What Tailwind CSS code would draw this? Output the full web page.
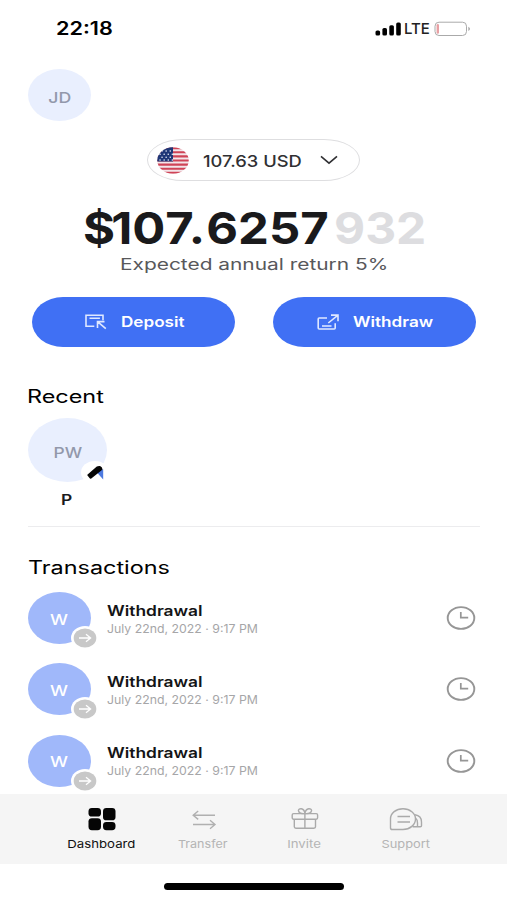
<!DOCTYPE html>
<html lang="en">
<head>
<meta charset="utf-8">
<title>Dashboard</title>
<script src="https://cdn.jsdelivr.net/npm/@tailwindcss/browser@4"></script>
</head>
<body class="bg-white">
<svg class="hidden">
  <symbol id="clock" viewBox="0 0 30 26"><ellipse cx="15" cy="13" rx="13.3" ry="10.9" fill="none" stroke="#969696" stroke-width="1.9"/><path d="M14.8 7v5.6h7.4" fill="none" stroke="#969696" stroke-width="1.7"/></symbol>
  <symbol id="arrow" viewBox="0 0 28 24"><ellipse cx="14" cy="12" rx="14" ry="12" fill="#fff"/><ellipse cx="14" cy="12" rx="11.3" ry="9.5" fill="#c8c8c8"/><path d="M8 12h11.5M15 8.2l4.6 3.8-4.6 3.8" fill="none" stroke="#fff" stroke-width="1.3"/></symbol>
</svg>
<div class="w-[507px] h-[900px] overflow-hidden flex flex-col font-['Inter',sans-serif] whitespace-nowrap text-[#1a1a1c]">
  <header class="h-[57px] shrink-0 flex items-center justify-between pl-14 pr-[35px]">
    <span class="text-[18px] leading-6 font-semibold text-black origin-left scale-x-[1.2]">22:18</span>
    <div class="flex items-center">
      <svg class="w-[27px] h-[14px]" viewBox="0 0 27 14"><g fill="#000"><rect x=".5" y="8.5" width="4.6" height="5" rx="1.6"/><rect x="7.4" y="6" width="4.6" height="7.5" rx="1.6"/><rect x="14.3" y="3.2" width="4.6" height="10.3" rx="1.6"/><rect x="21.2" y=".5" width="4.6" height="13" rx="1.6"/></g></svg>
      <span class="text-[15px] leading-6 font-medium w-[27px] ml-0.5 text-[#222]">LTE</span>
      <svg class="w-[38px] h-4 ml-[3px]" viewBox="0 0 38 16"><rect x="1" y="1.2" width="31.5" height="13.3" rx="4" fill="#fff" stroke="#aaa"/><rect x="2.6" y="3" width="2.4" height="9.7" rx="1.2" fill="#e8a0a4"/><path d="M34.3 5.8c2.2.8 2.2 3.4 0 4.2z" fill="#aaa"/></svg>
    </div>
  </header>

  <main class="h-[737px] shrink-0 flex flex-col pl-7 pr-[27px] overflow-hidden">
    <div class="mt-3 w-[63px] h-[52px] shrink-0 rounded-[50%] bg-[#e9effe] flex items-center justify-center pt-1.5">
      <span class="text-[15px] leading-5 font-medium text-[#9298ab] scale-x-[1.18]">JD</span>
    </div>

    <div class="mt-[18px] ml-[119px] w-[213px] h-[42px] shrink-0 border-[1.5px] border-[#dedee0] rounded-[36px/21px] flex items-center pl-[9px]">
      <svg class="w-8 h-[27px]" viewBox="0 0 32 27"><clipPath id="f"><ellipse cx="16" cy="13.5" rx="15.7" ry="13.2"/></clipPath><g clip-path="url(#f)"><path fill="#f3e6ea" d="M0 0h32v27H0z"/><path stroke="#cf4457" stroke-width="2.1" d="M0 1.2h32M0 5.3h32M0 9.4h32M0 13.5h32M0 17.6h32M0 21.7h32M0 25.8h32"/><path fill="#1f3777" d="M0 0h16v14.6H0z"/><path stroke="#e4e8f4" stroke-width="1.5" stroke-linecap="round" stroke-dasharray=".1 4" d="M5 4h11M3 7.2h13M5 10.2h11M3 12.9h13"/></g></svg>
      <span class="w-[117px] ml-3.5 pt-0.5 text-[16px] leading-5 font-medium text-[#303033]"><span class="inline-block origin-left scale-x-[1.145]">107.63 USD</span></span>
      <svg class="w-[18px] h-2.5" viewBox="0 0 18 10"><path d="M1 1.4l8 6.8 8-6.800" fill="none" stroke="#303033" stroke-width="1.6"/></svg>
    </div>

    <div class="mt-[22px] pl-[55px] h-[50px] shrink-0 flex items-center text-[44px] leading-[50px] font-bold">
      <span class="w-[251px]"><span class="inline-block origin-left scale-x-[1.113]"><span class="tracking-[-3.5px]">$</span>10<span class="tracking-[1px]">7.</span>6257</span></span>
      <span class="text-[#dddde0] origin-left scale-x-[1.09]">932</span>
    </div>
    <p class="pl-[92px] h-[22px] shrink-0 text-[16px] leading-[22px] text-[#58585b]"><span class="inline-block origin-left scale-x-[1.305]">Expected annual return 5%</span></p>

    <div class="mt-[22px] ml-1 flex gap-[38px] h-[50px] shrink-0 text-white font-semibold text-[14.5px] leading-5">
      <button class="w-[203px] rounded-[31px/25px] bg-[#4070f4] flex items-center pl-[53px]">
        <svg class="w-[22px] h-4" viewBox="0 0 22 16" fill="none" stroke="#dfe8ff" stroke-width="1.6"><path d="M9.3 12.3H1V1.2h17v5M4.5 4.3h10.4M12.500 14V7.600h7M12.800 7.800l8 6.900"/></svg>
        <span class="ml-3.5 origin-left scale-x-[1.18]">Deposit</span>
      </button>
      <button class="w-[203px] rounded-[31px/25px] bg-[#4070f4] flex items-center pl-[44px]">
        <svg class="w-[22px] h-4" viewBox="0 0 22 16" fill="none" stroke="#dfe8ff" stroke-width="1.6"><path d="M10 4H2.200q-1 0-1 1v9q0 1 1 1h15q1 0 1-1V9.200M14 1.100h7v6.200M20.700 1.400L11.300 9"/><path d="M5 12h9.500" stroke-width="2" stroke="#b9ccff"/></svg>
        <span class="ml-3.5 origin-left scale-x-[1.183]">Withdraw</span>
      </button>
    </div>

    <h2 class="mt-[38px] h-6 shrink-0 text-[18px] leading-6 font-normal text-black"><span class="inline-block origin-left scale-x-[1.3] -translate-x-px">Recent</span></h2>
    <div class="relative mt-[9px] w-[79px] h-[64px] shrink-0 rounded-[50%] bg-[#e9effe] flex items-center justify-center pt-1.5">
      <span class="text-[14.5px] leading-5 font-medium text-[#9298ab] scale-x-[1.2]">PW</span>
      <svg class="absolute left-[53px] top-[43px] w-7 h-[23px]" viewBox="0 0 28 23"><ellipse cx="14" cy="11.5" rx="14" ry="11.500" fill="#fff"/><path d="M15.500 11l6.700-2.800v10.300z" fill="#4d7ae0"/><path d="M6.600 13.400L15.800 5.600q1.600-1 3.200-.6 2.200.8 2.600 3.600l-11.300 8.800q-1 .7-1.800-.4l-2-2.400q-.5-.7.1-1.200z" fill="#060606"/></svg>
    </div>
    <p class="mt-2 h-5 shrink-0 w-[79px] text-center text-[14.5px] leading-5 font-semibold"><span class="inline-block scale-x-[1.2] -translate-x-px">P</span></p>
    <div class="mt-[16px] h-px shrink-0 bg-[#ececee]"></div>

    <h2 class="mt-[29px] h-6 shrink-0 text-[18px] leading-6 font-normal text-black"><span class="inline-block origin-left scale-x-[1.3]">Transactions</span></h2>

    <ul class="mt-[12px] flex flex-col gap-[19.4px]">
      <li class="h-[52px] shrink-0 flex items-center">
        <div class="relative w-[63px] h-[52px] rounded-[50%] bg-[#a0b8fa] flex items-center justify-center pt-[3px] text-white"><span class="text-[14px] font-medium leading-5 scale-x-[1.28]">W</span><svg class="absolute left-[43px] top-[34px] w-7 h-6"><use href="#arrow"/></svg></div>
        <div class="ml-4 flex-1 flex flex-col items-start"><span class="text-[14px] leading-[19px] font-semibold text-[#141416] origin-left scale-x-[1.24] mt-[3px]">Withdrawal</span><span class="text-[11.5px] leading-[19px] text-[#a6a6a8] origin-left scale-x-[1.07]">July 22nd, 2022 · 9:17 PM</span></div>
        <svg class="w-[30px] h-[26px] mr-1"><use href="#clock"/></svg>
      </li>
      <li class="h-[52px] shrink-0 flex items-center">
        <div class="relative w-[63px] h-[52px] rounded-[50%] bg-[#a0b8fa] flex items-center justify-center pt-[3px] text-white"><span class="text-[14px] font-medium leading-5 scale-x-[1.28]">W</span><svg class="absolute left-[43px] top-[34px] w-7 h-6"><use href="#arrow"/></svg></div>
        <div class="ml-4 flex-1 flex flex-col items-start"><span class="text-[14px] leading-[19px] font-semibold text-[#141416] origin-left scale-x-[1.24] mt-[3px]">Withdrawal</span><span class="text-[11.5px] leading-[19px] text-[#a6a6a8] origin-left scale-x-[1.07]">July 22nd, 2022 · 9:17 PM</span></div>
        <svg class="w-[30px] h-[26px] mr-1"><use href="#clock"/></svg>
      </li>
      <li class="h-[52px] shrink-0 flex items-center">
        <div class="relative w-[63px] h-[52px] rounded-[50%] bg-[#a0b8fa] flex items-center justify-center pt-[3px] text-white"><span class="text-[14px] font-medium leading-5 scale-x-[1.28]">W</span><svg class="absolute left-[43px] top-[34px] w-7 h-6"><use href="#arrow"/></svg></div>
        <div class="ml-4 flex-1 flex flex-col items-start"><span class="text-[14px] leading-[19px] font-semibold text-[#141416] origin-left scale-x-[1.24] mt-[3px]">Withdrawal</span><span class="text-[11.5px] leading-[19px] text-[#a6a6a8] origin-left scale-x-[1.07]">July 22nd, 2022 · 9:17 PM</span></div>
        <svg class="w-[30px] h-[26px] mr-1"><use href="#clock"/></svg>
      </li>
    </ul>
  </main>

  <nav class="h-[70px] shrink-0 bg-[#f5f5f5] grid grid-cols-4 px-[50px] text-[11px] leading-4 text-[#b4b4b4]">
    <a class="flex flex-col items-center pt-[13px] gap-[5px] text-[#111]">
      <svg class="w-7 h-6 translate-x-px" viewBox="0 0 28 24" fill="#050505"><rect x=".5" y="1" width="12.5" height="8.6" rx="3.4"/><rect x="15" y="1" width="12.5" height="12.3" rx="3.4"/><rect x=".5" y="11.2" width="12.5" height="12" rx="3.4"/><rect x="15" y="15" width="12.5" height="8.2" rx="3.4"/></svg>
      <span class="scale-x-[1.2]">Dashboard</span>
    </a>
    <a class="flex flex-col items-center pt-[13px] gap-[5px]">
      <svg class="w-7 h-6 translate-x-px" viewBox="0 0 28 24" fill="none" stroke="#b0b0b0" stroke-width="1.4"><path d="M25 8.2H3.4M8.2 4L3.2 8.2l5 4.2M3 17.5h21.7M20 13.2l5 4.3-5 4.2"/></svg>
      <span class="scale-x-[1.14]">Transfer</span>
    </a>
    <a class="flex flex-col items-center pt-[13px] gap-[5px]">
      <svg class="w-7 h-6 translate-x-px" viewBox="0 0 28 24" fill="none" stroke="#aaa" stroke-width="1.4"><rect x="1.2" y="6.6" width="25.4" height="5.6" rx="1.4"/><path d="M3.3 12.2v7.6q0 1.4 1.6 1.4h18q1.6 0 1.6-1.4v-7.6M13.9 6.600v14.600M13.900 6.400C11 7 7.400 6 7.400 3.600S13 .3 13.900 6.400C15 .3 20.600 1.200 20.600 3.600S17 7 13.900 6.400z"/></svg>
      <span class="scale-x-[1.2]">Invite</span>
    </a>
    <a class="flex flex-col items-center pt-[13px] gap-[5px]">
      <svg class="w-[34px] h-6" viewBox="0 0 34 24" fill="none" stroke="#aaa" stroke-width="1.4"><path d="M1.500 21V12C1.500 6 7 1.800 14 1.800S26.500 6.300 26.500 12 21 22.500 14 22.500H3.200q-1.700 0-1.700-1.500z"/><path d="M8.500 9.500h12.500M8.500 15h12.500M26 7.800c4 .6 6.500 3.500 6.500 7.200v3.700q0 1-1.200 1h-7.700M26.500 11c1.500 1.200 2 3 2 5v3.500"/></svg>
      <span class="scale-x-[1.17]">Support</span>
    </a>
  </nav>
  <div class="mt-[19px] ml-[164px] w-[180px] h-[7px] shrink-0 rounded-full bg-black"></div>
</div>
</body>
</html>
